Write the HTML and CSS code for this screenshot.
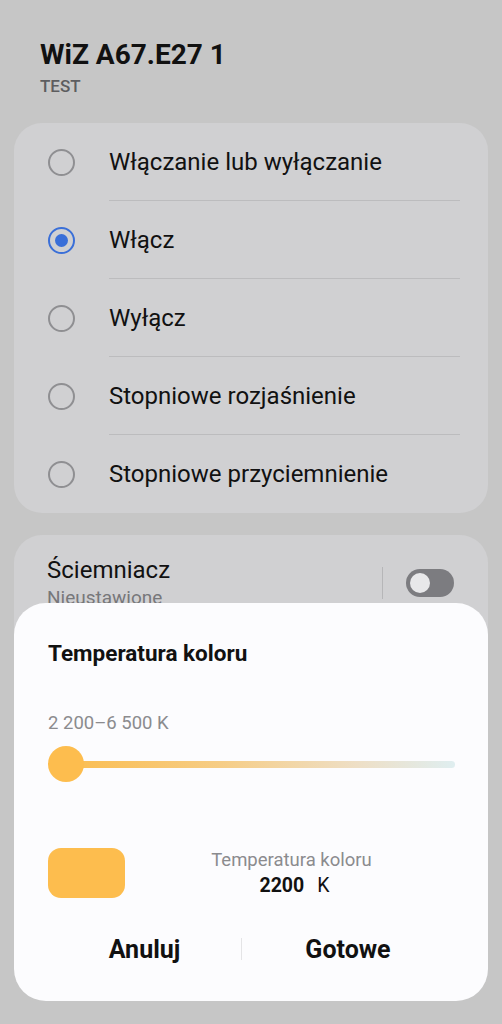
FILE: index.html
```html
<html>
    <head>
        <meta charset="UTF-8">
        <link rel="stylesheet" href="styles.css">
    </head>
    <body>
        <div class="header">
            <h1>WiZ A67.E27 1</h1>
            <div class="sub">TEST</div>
        </div>
        <div class="card">
            <div class="row"><span class="radio"></span><span class="label">Włączanie lub wyłączanie</span></div>
            <div class="row"><span class="radio checked"></span><span class="label">Włącz</span></div>
            <div class="row"><span class="radio"></span><span class="label">Wyłącz</span></div>
            <div class="row"><span class="radio"></span><span class="label">Stopniowe rozjaśnienie</span></div>
            <div class="row last"><span class="radio"></span><span class="label">Stopniowe przyciemnienie</span></div>
        </div>
        <div class="card dimmer">
            <div class="dimmer-text">
                <div class="dimmer-title">Ściemniacz</div>
                <div class="dimmer-sub">Nieustawione</div>
            </div>
            <div class="vline"></div>
            <div class="toggle"><span class="knob"></span></div>
        </div>

        <div class="dialog">
            <h2>Temperatura koloru</h2>
            <div class="range">2 200–6 500 K</div>
            <div class="slider">
                <div class="track"></div>
                <div class="thumb"></div>
            </div>
            <div class="preview">
                <div class="swatch"></div>
                <div class="value">
                    <div class="value-label">Temperatura koloru</div>
                    <div class="value-num"><b>2200</b><span class="unit">K</span></div>
                </div>
            </div>
            <div class="buttons">
                <button class="cancel">Anuluj</button>
                <span class="sep"></span>
                <button>Gotowe</button>
            </div>
        </div>
    </body>
</html>
```

FILE: styles.css
```css
body {
    margin: 0;
    background-color: #c6c6c6;
    font-family: Roboto, "Noto Sans", sans-serif;
    color: #111;
    width: 502px;
    height: 1024px;
    position: relative;
    overflow: hidden;
}

.header {
    padding: 38px 40px 0 40px;
    box-sizing: border-box;
    height: 123px;
}

h1 {
    margin: 0;
    font-size: 28px;
    font-weight: bold;
    line-height: 34px;
}

.sub {
    font-size: 17px;
    font-weight: 500;
    color: #5d5d5f;
    margin-top: 4px;
}

.card {
    background-color: #d0d0d2;
    margin: 0 14px;
    border-radius: 28px;
    padding: 0;
}

.row {
    display: flex;
    align-items: center;
    height: 78px;
    position: relative;
}

.row::after {
    content: '';
    position: absolute;
    left: 95px;
    right: 28px;
    bottom: 0;
    height: 1px;
    background-color: #bcbcbe;
}

.row.last::after {
    display: none;
}

.radio {
    width: 23px;
    height: 23px;
    border: 2px solid #8f8f92;
    border-radius: 50%;
    margin-left: 34px;
    margin-right: 34px;
    box-sizing: content-box;
    position: relative;
}

.radio.checked {
    border-color: #3a6fd8;
}

.radio.checked::before {
    content: '';
    position: absolute;
    left: 5px;
    top: 5px;
    width: 13px;
    height: 13px;
    border-radius: 50%;
    background-color: #3a6fd8;
}

.label {
    font-size: 24px;
}

.dimmer {
    margin-top: 22px;
    display: flex;
    align-items: center;
    padding: 21px 34px 60px 33px;
}

.dimmer-text {
    flex: 1;
}

.dimmer-title {
    font-size: 24px;
}

.dimmer-sub {
    font-size: 19px;
    color: #77777a;
    margin-top: 2px;
}

.vline {
    width: 1px;
    height: 32px;
    background-color: #b6b6b8;
    margin-right: 23px;
}

.toggle {
    width: 48px;
    height: 28px;
    border-radius: 14px;
    background-color: #7c7c80;
    position: relative;
}

.knob {
    position: absolute;
    left: 4px;
    top: 4px;
    width: 20px;
    height: 20px;
    border-radius: 50%;
    background-color: #e8e8ea;
}

.dialog {
    position: absolute;
    left: 14px;
    top: 603px;
    width: 474px;
    height: 398px;
    box-sizing: border-box;
    background-color: #fcfcfe;
    border-radius: 32px;
    padding: 36px 34px 0 34px;
}

h2 {
    margin: 0;
    font-size: 22.5px;
    font-weight: bold;
    line-height: 28px;
}

.range {
    margin-top: 45px;
    font-size: 18.5px;
    color: #8b8b8e;
}

.slider {
    position: relative;
    height: 36px;
    margin-top: 12px;
}

.track {
    position: absolute;
    left: 17px;
    right: -1px;
    top: 15px;
    height: 7px;
    border-radius: 4px;
    background: linear-gradient(to right, #fbbd4f, #f6cd86 40%, #eedfc6 75%, #dfeef0);
}

.thumb {
    position: absolute;
    left: 0;
    top: 0;
    width: 36px;
    height: 36px;
    border-radius: 50%;
    background-color: #fdbd4e;
}

.preview {
    display: flex;
    align-items: center;
    height: 50px;
    margin-top: 66px;
}

.swatch {
    width: 77px;
    height: 50px;
    border-radius: 13px;
    background-color: #fdbd4e;
}

.value {
    flex: 1;
    text-align: center;
    padding-left: 4px;
}

.value-label {
    font-size: 18.5px;
    color: #8b8b8e;
    line-height: 22px;
}

.value-num {
    font-size: 19.5px;
    line-height: 24px;
    margin-top: 3px;
    padding-left: 6px;
}

.unit {
    margin-left: 13px;
}

.buttons {
    display: flex;
    align-items: center;
    margin-top: 31px;
}

.buttons button {
    flex: 1;
    background: none;
    border: none;
    font-family: Roboto, "Noto Sans", sans-serif;
    font-size: 25px;
    font-weight: bold;
    color: #111;
    padding: 0;
    height: 40px;
}

.buttons .cancel {
    flex: 0 0 193px;
}

.sep {
    width: 1px;
    height: 22px;
    background-color: #e4e4e6;
}
```
